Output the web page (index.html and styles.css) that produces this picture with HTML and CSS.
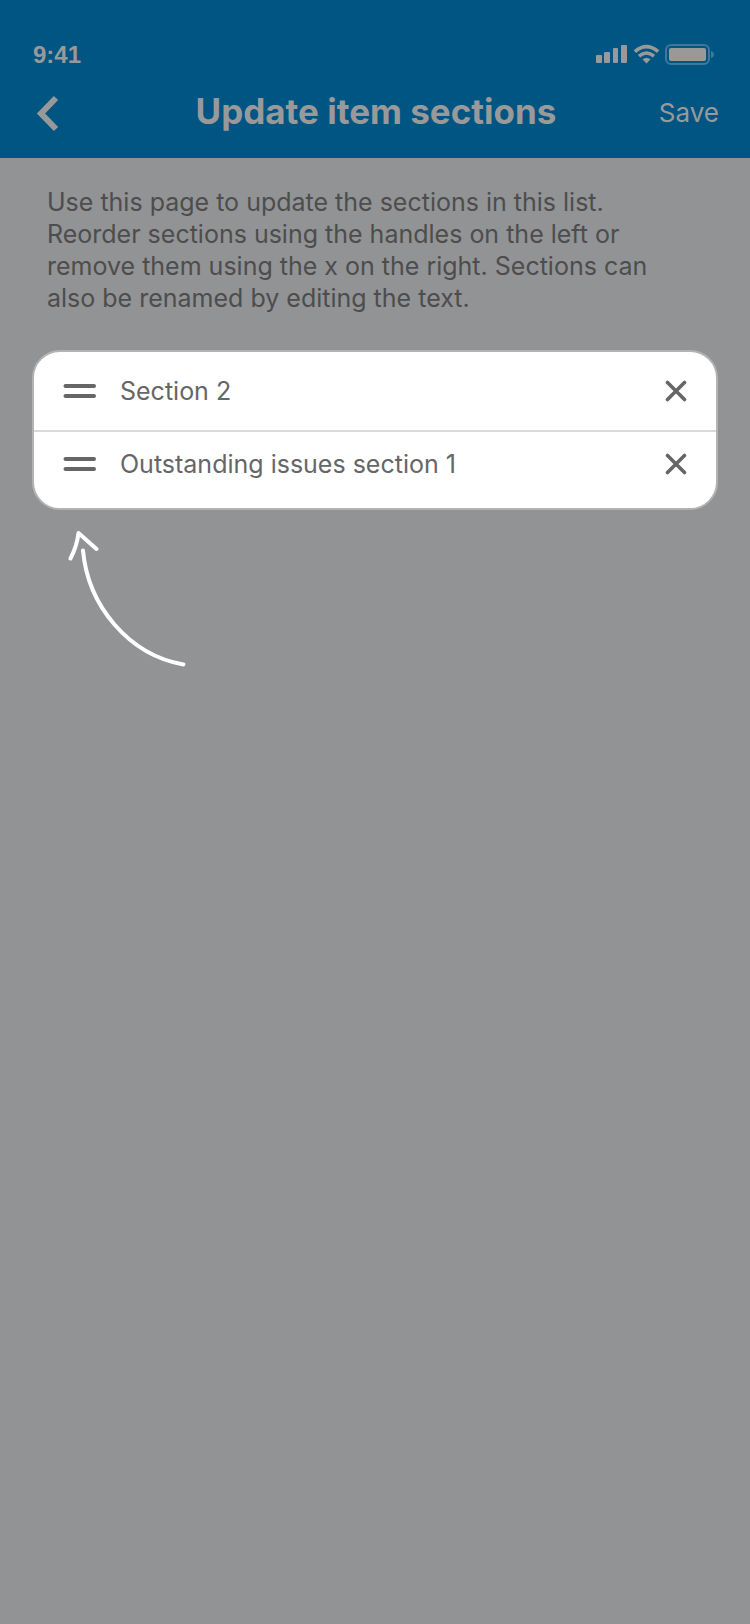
FILE: index.html
```html
<!DOCTYPE html>
<html lang="en">
<head>
<meta charset="utf-8">
<meta name="viewport" content="width=device-width, initial-scale=1">
<title>Update item sections</title>
<link rel="stylesheet" href="styles.css">
</head>
<body>
<header class="header">
  <div class="status">
    <span class="time">9:41</span>
    <svg class="status-icons" width="118" height="22" viewBox="0 0 118 22" aria-hidden="true">
      <g fill="#999">
        <rect x="0" y="11" width="6" height="8" rx="1"/>
        <rect x="8" y="8" width="6" height="11" rx="1"/>
        <rect x="17" y="4" width="5" height="15" rx="1"/>
        <rect x="25" y="1" width="6" height="18" rx="1"/>
        <path d="M46.500 15.200q4-3 8 0l-4 4.200z"/>
        <rect x="73" y="4" width="37" height="13" rx="2"/>
      </g>
      <g fill="none" stroke="#999" stroke-width="3.600">
        <path d="M38.900 7.700q11.600-10 23.200 0"/>
        <path d="M43 12.200q7.500-6.400 15 0"/>
      </g>
      <rect x="70" y="1" width="43" height="19" rx="5" fill="none" stroke="#41779a" stroke-width="2"/>
      <path d="M115 7q3 1 3 3.500t-3 3.500z" fill="#41779a"/>
    </svg>
  </div>
  <div class="nav">
    <button class="back" type="button" aria-label="Back">
      <svg width="24" height="38" viewBox="0 0 24 38" aria-hidden="true"><path d="M20 3L5 18.500L20 34" fill="none" stroke="#999" stroke-width="6"/></svg>
    </button>
    <h1 class="title">Update item sections</h1>
    <button class="save" type="button">Save</button>
  </div>
</header>
<main class="main">
  <p class="intro">Use this page to update the sections in this list. Reorder sections using the handles on the left or remove them using the x on the right. Sections can also be renamed by editing the text.</p>
  <ul class="sections">
    <li class="row">
      <button class="icon handle" type="button" aria-label="Reorder Section 2">
        <svg width="33" height="14" viewBox="0 0 33 14" aria-hidden="true"><path d="M2.500 2h28.500M2.500 12h28.500" stroke="#666" stroke-width="4" stroke-linecap="round"/></svg>
      </button>
      <input class="name" type="text" value="Section 2" aria-label="Section name">
      <button class="icon" type="button" aria-label="Remove Section 2">
        <svg width="22" height="22" viewBox="0 0 22 22" aria-hidden="true"><path d="M2.500 2.500l17 17M19.500 2.500l-17 17" stroke="#666" stroke-width="3.600" stroke-linecap="round"/></svg>
      </button>
    </li>
    <li class="row">
      <button class="icon handle" type="button" aria-label="Reorder Outstanding issues section 1">
        <svg width="33" height="14" viewBox="0 0 33 14" aria-hidden="true"><path d="M2.500 2h28.500M2.500 12h28.500" stroke="#666" stroke-width="4" stroke-linecap="round"/></svg>
      </button>
      <input class="name" type="text" value="Outstanding issues section 1" aria-label="Section name">
      <button class="icon" type="button" aria-label="Remove Outstanding issues section 1">
        <svg width="22" height="22" viewBox="0 0 22 22" aria-hidden="true"><path d="M2.500 2.500l17 17M19.500 2.500l-17 17" stroke="#666" stroke-width="3.600" stroke-linecap="round"/></svg>
      </button>
    </li>
  </ul>
  <svg class="pointer" width="120" height="140" viewBox="0 0 120 140" aria-hidden="true">
    <path d="M2.500 29.500Q9 17 10.500 4L28.500 20M15 21.500C20 77 61 126 115.500 135.500" fill="none" stroke="#fff" stroke-width="4" stroke-linecap="round" stroke-linejoin="round"/>
  </svg>
</main>
</body>
</html>
```

FILE: styles.css
```css
* {
  box-sizing: border-box;
}

body {
  margin: 0;
  min-height: 100vh;
  background: #929395;
  color: #4d4d4d;
  font-family: Inter, "Liberation Sans", sans-serif;
}

button {
  padding: 0;
  border: 0;
  background: none;
  color: inherit;
  font: inherit;
}

svg {
  display: block;
}

.header {
  padding: 40px 31px 18px 33px;
  background: #005583;
  color: #999;
}

.status {
  display: flex;
  align-items: center;
  justify-content: space-between;
  height: 29px;
}

.time {
  font: bold 24px/28px "Liberation Sans", Arial, sans-serif;
}

.status-icons {
  margin-right: 5px;
}

.nav {
  display: grid;
  grid-template-columns: 1fr auto 1fr;
  align-items: center;
  height: 58px;
  margin-top: 13px;
}

.back {
  justify-self: start;
  padding: 6px 3px 0;
}

.title {
  margin: 0;
  font-size: 35px;
  font-weight: 700;
  line-height: 44px;
}

.save {
  justify-self: end;
  padding-top: 4px;
  font-size: 26px;
  line-height: 32px;
}

.main {
  padding: 28px 32px;
}

.intro {
  max-width: 640px;
  margin: 0 15px;
  font-size: 25px;
  line-height: 32px;
}

.sections {
  margin: 36px 0 0;
  padding: 0;
  border: 2px solid #b3b3b3;
  border-radius: 28px;
  background: #fff;
  overflow: hidden;
  list-style: none;
}

.row {
  display: flex;
  align-items: center;
  gap: 24px;
  padding: 19px 29px;
}

.row + .row {
  padding: 12px 29px 24px;
  border-top: 2px solid #d9d9d9;
}

.icon {
  flex: none;
}

.name {
  flex: 1;
  min-width: 0;
  height: 40px;
  padding: 0;
  border: 0;
  background: none;
  color: #666;
  font: 25px/40px Inter, "Liberation Sans", sans-serif;
}

.pointer {
  margin: 19px 0 0 36px;
}
```
